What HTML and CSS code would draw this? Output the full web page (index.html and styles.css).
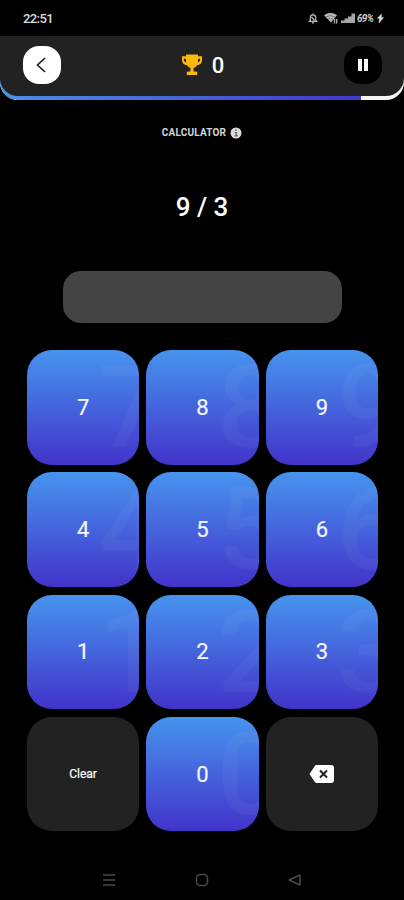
FILE: index.html
```html
<!DOCTYPE html>
<html lang="en">
<head>
<meta charset="utf-8">
<title>Calculator</title>
<link rel="stylesheet" href="styles.css">
</head>
<body>
<div class="screen">
  <div class="status">
    <span class="clock">22:51</span>
    <div class="indicators">
      <svg class="bell" width="10" height="12" viewBox="0 0 10 12"><path d="M2.300 8V5.500a2.700 2.700 0 0 1 5.400 0V8l1 1.300H1.300zM5 1.500v1.500M4 10.800h2M3.500 5l3 3.500" fill="none" stroke="#bbb" stroke-width="1.200"/></svg>
      <svg class="wifi" width="14" height="12" viewBox="0 0 14 12"><path d="M0 3.200Q6.500-1.200 13 3.200L7 10.500z" fill="#bbb"/><path d="M1.800 5Q6.500 2 11 5M4 7.300Q6.500 5.700 9 7.300" fill="none" stroke="#555" stroke-width=".7"/><path d="M10.500 7v4.500M12.700 7v4.500" stroke="#aaa" stroke-width="1.400"/></svg>
      <svg class="signal" width="15" height="11" viewBox="0 0 15 11"><path d="M0 7.500h3.600v-2H7v-2h3.500V.5H14V10H0z" fill="#a5a5a5"/></svg>
      <span class="battery">69%</span>
      <svg class="bolt" width="7" height="9" viewBox="0 0 7 9"><path d="M4.500 0 .3 4.300h2.200L2 9l4.500-5.500H4.200z" fill="#ddd" stroke="#ddd" stroke-width=".5"/></svg>
    </div>
  </div>
  <div class="progress">
    <div class="fill"></div>
    <header class="bar">
      <button class="round back"><svg width="38" height="38" viewBox="0 0 38 38"><path d="M22 12l-7.500 7 7.500 7" fill="none" stroke="#222" stroke-width="1.700"/></svg></button>
      <div class="score">
        <svg width="22" height="22" viewBox="0 0 22 22"><path d="M5 .5h12v1.700h4v3.800c0 3-2 5-5 5.300a6 6 0 0 1-3.500 2.700v3.500h2.700q1 0 1 1V21H5.800v-2.500q0-1 1-1h2.700V14A6 6 0 0 1 6 11.300C3 11 1 9 1 6V2.200h4zM3 4.800V6c0 1 .8 2 2 2.300V4.800zM19 4.800h-2V8.300C18.200 8 19 7 19 6z" fill="#fdb90b" fill-rule="evenodd"/></svg>
        <span>0</span>
      </div>
      <button class="round pause"><svg width="38" height="38" viewBox="0 0 38 38"><path d="M14 13h4v12h-4zM20 13h4v12h-4z" fill="#fff"/></svg></button>
    </header>
  </div>
  <div class="title"><span>CALCULATOR</span><svg width="12" height="12" viewBox="0 0 12 12"><circle cx="6" cy="6" r="5.500" fill="#ddd"/><path d="M6 2.300v1.600M4.800 5.500H6.200v3.200M4.500 8.900h3.200" fill="none" stroke="#555" stroke-width="1.200"/></svg></div>
  <div class="question">9 / 3</div>
  <div class="answer"></div>
  <main class="keys">
    <button class="key"><i>7</i><b>7</b></button>
    <button class="key"><i>8</i><b>8</b></button>
    <button class="key"><i>9</i><b>9</b></button>
    <button class="key"><i>4</i><b>4</b></button>
    <button class="key"><i>5</i><b>5</b></button>
    <button class="key"><i>6</i><b>6</b></button>
    <button class="key"><i>1</i><b>1</b></button>
    <button class="key"><i>2</i><b>2</b></button>
    <button class="key"><i>3</i><b>3</b></button>
    <button class="key dark"><span class="clear">Clear</span></button>
    <button class="key"><i>0</i><b>0</b></button>
    <button class="key dark"><svg width="26" height="20" viewBox="0 0 26 20"><path d="M7.500 1H22q3 0 3 3v12q0 3-3 3H7.500Q6.500 19 5.800 18L.5 10 5.800 2Q6.500 1 7.500 1z" fill="#fff"/><path d="M11 6.500l7 7M18 6.500l-7 7" stroke="#222" stroke-width="2"/></svg></button>
  </main>
  <nav class="nav">
    <svg width="14" height="14" viewBox="0 0 14 14"><path d="M1 2h12M1 7h12M1 12h12" stroke="#484848" stroke-width="1.500"/></svg>
    <svg width="14" height="14" viewBox="0 0 14 14"><rect x="1.500" y="1.500" width="11" height="11" rx="3.500" fill="none" stroke="#484848" stroke-width="1.500"/></svg>
    <svg width="14" height="14" viewBox="0 0 14 14"><path d="M12 2.500v9q0 .6-.7.300L1.500 7.300q-.5-.3 0-.6l9.800-4.500q.7-.3.700.3z" fill="none" stroke="#484848" stroke-width="1.500"/></svg>
  </nav>
</div>
</body>
</html>
```
FILE: styles.css
```css
* { box-sizing: border-box; }
body { margin: 0; background: #000; color: #fff; font-family: Roboto, sans-serif; }
button { border: 0; padding: 0; margin: 0; font: inherit; color: inherit; background: none; }
svg { display: block; flex: none; }
.screen { width: 404px; height: 900px; overflow: hidden; display: flex; flex-direction: column; align-items: center; }
.status { width: 100%; height: 36px; padding: 0 20px 0 23px; display: flex; align-items: center; justify-content: space-between; flex: none; }
.clock { font-size: 13px; letter-spacing: -0.6px; color: #ddd; font-weight: 500; }
.indicators { display: flex; align-items: center; }
.wifi { margin-left: 6px; }
.signal { margin-left: 3px; }
.battery { margin-left: 1px; width: 19px; font-size: 10px; letter-spacing: -0.7px; font-style: italic; font-weight: 700; color: #ccc; }
.bolt { margin-left: 1px; }
.progress { width: 100%; height: 64px; flex: none; display: grid; grid-template: 64px / 404px; overflow: hidden; border-radius: 0 0 18px 18px; background: #f6f6f2; }
.fill { grid-area: 1 / 1; width: 361px; background: linear-gradient(90deg, #4b91e6, #4238c8); }
.bar { grid-area: 1 / 1; height: 59.5px; padding: 0 22px 1px 23px; display: flex; align-items: center; justify-content: space-between; background: #222; border-radius: 0 0 18px 18px; }
.round { width: 37.5px; height: 38px; border-radius: 16px; }
.back { background: #fff; }
.pause { background: #000; }
.score { display: flex; align-items: center; gap: 9px; font-size: 22px; line-height: 24px; font-weight: 500; }
.score span { padding-top: 1px; }
.title { height: 12px; margin-top: 27px; display: flex; align-items: center; gap: 4px; font-size: 10px; letter-spacing: 0.2px; line-height: 12px; font-weight: 700; color: #d4d4d4; flex: none; }
.question { margin-top: 52px; height: 32px; line-height: 32px; font-size: 26px; font-weight: 500; flex: none; }
.answer { width: 279px; height: 52px; margin-top: 48px; border-radius: 18px; background: #444; flex: none; }
.keys { margin-top: 27.3px; margin-left: 1px; display: grid; grid-template-columns: repeat(3, 112.4px); grid-auto-rows: 114.6px; gap: 7.6px 7px; flex: none; }
.key { position: relative; overflow: hidden; border-radius: 25px; display: flex; align-items: center; justify-content: center; background: linear-gradient(#4794ee, #4233ca); }
.key b { font-size: 22px; font-weight: 400; color: #f2f5ff; -webkit-text-stroke: 0.2px #f2f5ff; }
.key i { position: absolute; left: 71px; top: -10px; font-size: 115px; line-height: 135px; font-style: normal; font-weight: 500; color: rgba(255, 255, 255, 0.04); }
.dark { background: #222; }
.clear { font-size: 12px; font-weight: 400; -webkit-text-stroke: 0.2px #fff; }
.nav { margin-top: 42px; width: 200px; display: flex; justify-content: space-between; flex: none; }
```
